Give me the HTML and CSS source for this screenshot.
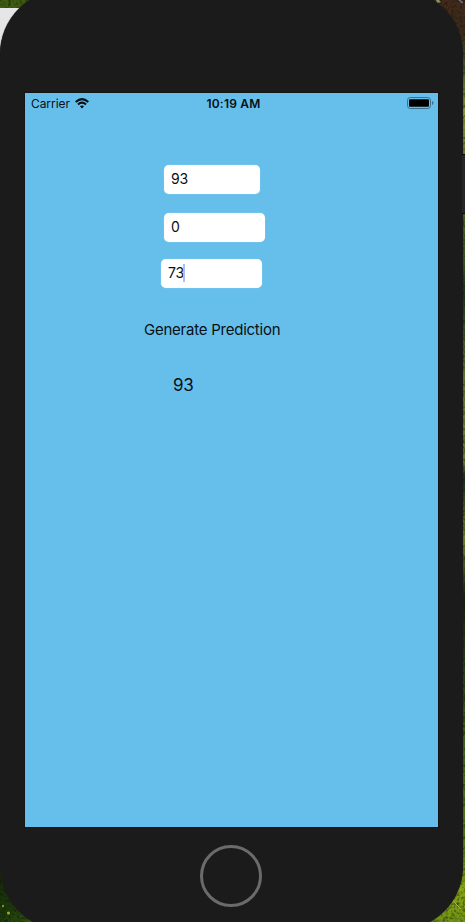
FILE: index.html
```html
<!DOCTYPE html>
<html lang="en">
<head>
<meta charset="utf-8">
<title>Prediction</title>
<link rel="stylesheet" href="styles.css">
</head>
<body>
<svg class="wallpaper" width="465" height="922" viewBox="0 0 465 922" aria-hidden="true">
  <defs>
    <linearGradient id="edge" x1="0" y1="0" x2="0" y2="1">
      <stop offset="0" stop-color="#43291b"/>
      <stop offset=".035" stop-color="#3b2a1c"/>
      <stop offset=".07" stop-color="#42522a"/>
      <stop offset=".12" stop-color="#84963c"/>
      <stop offset=".2" stop-color="#546c25"/>
      <stop offset=".28" stop-color="#3b5720"/>
      <stop offset=".32" stop-color="#1f351c"/>
      <stop offset=".42" stop-color="#657e34"/>
      <stop offset=".5" stop-color="#6b7d38"/>
      <stop offset=".52" stop-color="#17291b"/>
      <stop offset=".58" stop-color="#6f8b2c"/>
      <stop offset=".65" stop-color="#14200f"/>
      <stop offset=".8" stop-color="#3e611a"/>
      <stop offset=".93" stop-color="#557d14"/>
      <stop offset=".965" stop-color="#88a516"/>
      <stop offset="1" stop-color="#729314"/>
    </linearGradient>
    <linearGradient id="window" x1="0" y1="0" x2="0" y2="1">
      <stop offset="0" stop-color="#e6e6e6"/>
      <stop offset="1" stop-color="#cdcdcd"/>
    </linearGradient>
    <linearGradient id="grass" x1="0" y1="0" x2="1" y2="1">
      <stop offset="0" stop-color="#122409"/>
      <stop offset=".5" stop-color="#1d390b"/>
      <stop offset="1" stop-color="#477016"/>
    </linearGradient>
    <filter id="grain" x="0" y="0" width="1" height="1" color-interpolation-filters="sRGB">
      <feTurbulence type="fractalNoise" baseFrequency=".35" numOctaves="2" seed="4"/>
      <feColorMatrix values="0 0 0 0 .03  0 0 0 0 .08  0 0 0 0 0  1.4 0 0 0 -.6"/>
    </filter>
  </defs>
  <rect x="400" width="65" height="922" fill="url(#edge)"/>
  <rect width="60" height="8" fill="#3d5c12"/>
  <rect y="850" width="60" height="72" fill="url(#grass)"/>
  <rect x="400" width="65" height="922" filter="url(#grain)"/>
  <rect width="60" height="8" filter="url(#grain)"/>
  <rect y="850" width="60" height="72" filter="url(#grain)"/>
  <path d="M436 0h3l2 2-4 1z" fill="#86965c"/>
  <path d="M459 0l4 3" stroke="#77738a" stroke-width="1.500"/>
  <circle cx="3" cy="906" r="1.2" fill="#78961f"/>
  <circle cx="8.500" cy="913" r="1.600" fill="#9bab20"/>
  <path d="M453 901l8 8" stroke="#a5b64b" stroke-width="1"/>
  <rect y="8" width="60" height="300" fill="url(#window)"/>
</svg>
<main class="phone">
  <span class="side-button"></span>
  <section class="screen">
    <header class="status">
      <span class="carrier">Carrier
        <svg width="14" height="11" viewBox="0 0 14 11" aria-hidden="true">
          <g fill="none" stroke="#071015" stroke-width="2.100">
            <path d="M.7 4.100Q7-1.700 13.300 4.100"/>
            <path d="M3 6.500Q7 2.900 11 6.500"/>
          </g>
          <path d="M4.900 8.300Q7 6.700 9.100 8.300L7 10.500z" fill="#071015"/>
        </svg>
      </span>
      <time class="time">10:19 AM</time>
      <svg class="battery" width="27" height="12" viewBox="0 0 27 12" aria-hidden="true">
        <rect x=".5" y=".5" width="23" height="11" rx="2.800" fill="none" stroke="#38718d"/>
        <rect x="2" y="2.200" width="20" height="7.600" rx="1" fill="#000"/>
        <path d="M25 4q1.500.5 1.500 2T25 8z" fill="#38718d"/>
      </svg>
    </header>
    <form class="form">
      <div class="field field-first">93</div>
      <div class="field field-second">0</div>
      <div class="field field-third">73<i class="caret"></i></div>
      <button class="generate" type="button">Generate Prediction</button>
      <output class="result">93</output>
    </form>
  </section>
  <span class="home"></span>
</main>
</body>
</html>
```
FILE: styles.css
```css
* {
  box-sizing: border-box;
}

html,
body {
  height: 100%;
  margin: 0;
  overflow: hidden;
}

body {
  position: relative;
  background: #1b1b1b;
  color: #071015;
  font-family: Inter, "Liberation Sans", sans-serif;
}

.wallpaper {
  position: absolute;
  inset: 0;
}

.phone {
  position: relative;
  display: flex;
  flex-direction: column;
  width: 463px;
  height: 940px;
  margin-top: -10px;
  padding: 103px 25px 0 25px;
  border-radius: 64px;
  background: #1b1b1b;
  box-shadow: 0 0 1px #242424;
}

.side-button {
  position: absolute;
  top: 164px;
  right: -2px;
  width: 3px;
  height: 60px;
  border-block: 1px solid #080808;
  background: #262626;
}

.screen {
  height: 734px;
  background: #66bfeb;
  box-shadow: 0 0 0 1px #151515;
}

.status {
  display: grid;
  grid-template-columns: 1fr auto 1fr;
  align-items: center;
  height: 20px;
  padding: 0 4px 0 6px;
  font-size: 12px;
}

.carrier {
  display: flex;
  align-items: center;
  gap: 5px;
  letter-spacing: -0.07px;
}

.time {
  padding-left: 2px;
  font-weight: 600;
  letter-spacing: 0.22px;
}

.battery {
  justify-self: end;
}

.form {
  display: flex;
  flex-direction: column;
  align-items: flex-start;
  padding: 52px 0 0 119px;
}

.field {
  display: flex;
  align-items: center;
  width: 101px;
  height: 29px;
  margin-left: 20px;
  padding: 0 0 2px 7px;
  border-radius: 5px;
  background: #fff;
  box-shadow: 0 0 1px #b9dced;
  font-size: 14px;
  letter-spacing: -0.1px;
}

.field-first {
  width: 96px;
}

.field-second {
  margin-top: 19px;
}

.field-third {
  margin: 17px 0 0 17px;
}

.caret {
  width: 2px;
  height: 18px;
  margin-left: -1px;
  background: #aebcf7;
}

.generate {
  height: 24px;
  margin-top: 30px;
  padding: 0;
  border: 0;
  background: none;
  color: inherit;
  font: 15px/24px Inter, "Liberation Sans", sans-serif;
  letter-spacing: -0.24px;
  white-space: nowrap;
}

.result {
  margin: 31px 0 0 29px;
  font-size: 17px;
  line-height: 24px;
  letter-spacing: -0.3px;
}

.home {
  width: 62px;
  height: 62px;
  margin: 18px 0 0 175px;
  border: 3px solid #6b6b6b;
  border-radius: 50%;
}
```
